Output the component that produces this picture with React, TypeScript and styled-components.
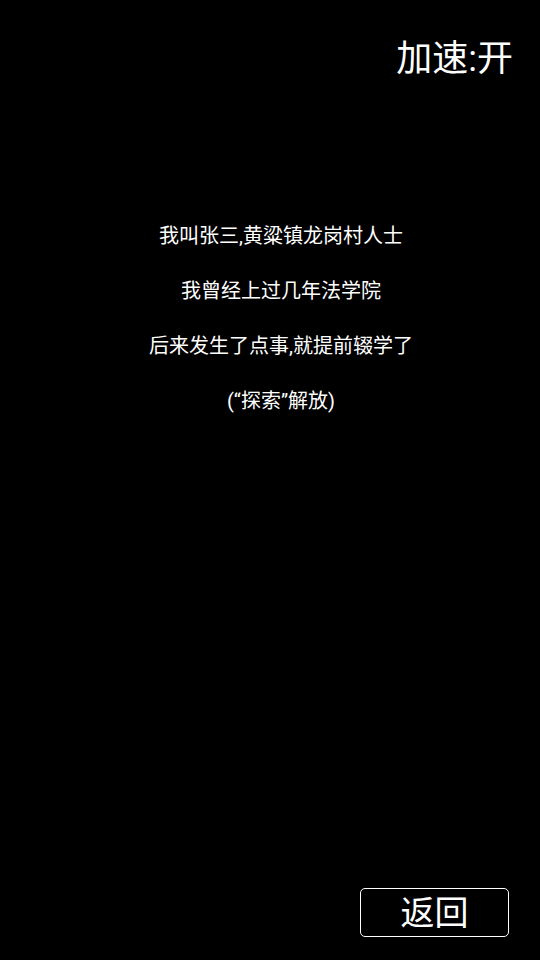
import React from 'react';
import styled, { createGlobalStyle } from 'styled-components';

const GlobalStyle = createGlobalStyle`
  html, body {
    margin: 0;
    padding: 0;
    background: #000;
  }
  body {
    font-family: Roboto, "Noto Sans CJK SC", sans-serif;
    color: #fff;
  }
`;

const Screen = styled.div`
  width: 540px;
  height: 960px;
  background: #000;
  display: flex;
  flex-direction: column;
  box-sizing: border-box;
  overflow: hidden;
`;

const TopBar = styled.div`
  display: flex;
  justify-content: flex-end;
  padding: 38px 27px 0 0;
`;

const SpeedToggle = styled.div`
  font-size: 36px;
  line-height: 43px;
  color: #fff;
  cursor: pointer;
`;

const Story = styled.div`
  margin-top: 128px;
  padding-left: 22px;
  display: flex;
  flex-direction: column;
  align-items: center;
`;

const Line = styled.div`
  font-size: 20px;
  line-height: 55px;
  color: #fff;
  text-align: center;
`;

const BackButton = styled.button`
  margin-top: auto;
  align-self: flex-end;
  margin-right: 31px;
  margin-bottom: 23px;
  width: 149px;
  height: 49px;
  box-sizing: border-box;
  background: transparent;
  border: 1.5px solid #fff;
  border-radius: 5px;
  color: #fff;
  font-family: Roboto, "Noto Sans CJK SC", sans-serif;
  font-size: 34px;
  line-height: 1;
  padding: 0;
  display: flex;
  align-items: center;
  justify-content: center;
`;

const lines = [
  '我叫张三,黄粱镇龙岗村人士',
  '我曾经上过几年法学院',
  '后来发生了点事,就提前辍学了',
  '(“探索”解放)',
];

export default function App() {
  return (
    <Screen>
      <GlobalStyle />
      <TopBar>
        <SpeedToggle>加速:开</SpeedToggle>
      </TopBar>
      <Story>
        {lines.map((text) => (
          <Line key={text}>{text}</Line>
        ))}
      </Story>
      <BackButton>返回</BackButton>
    </Screen>
  );
}
